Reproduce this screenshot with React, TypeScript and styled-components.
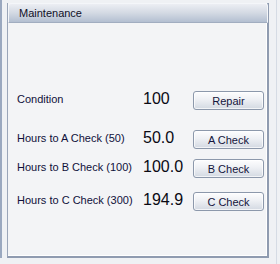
import React from 'react'
import styled, {createGlobalStyle} from 'styled-components'

const GlobalStyle = createGlobalStyle`
  html, body {
    margin: 0;
    padding: 0;
    background: #eff1f4;
  }
  body {
    font-family: "Liberation Sans", Tahoma, Arial, sans-serif;
    font-size: 11px;
  }
`

const Screen = styled.div`
  position: relative;
  width: 280px;
  height: 264px;
  overflow: hidden;
  display: flex;
  align-items: flex-start;
`

const LeftEdge = styled.div`
  width: 2px;
  height: 258px;
  background: #9aa8bf;
  flex-shrink: 0;
`

const RightEdge = styled.div`
  width: 1px;
  height: 264px;
  margin-left: 7px;
  background: #d5dbe4;
  flex-shrink: 0;
`

const Panel = styled.section`
  margin-left: 5px;
  margin-top: 3px;
  width: 262px;
  height: 255px;
  box-sizing: border-box;
  background: #f3f4f6;
  border-left: 1px solid #9aa5b8;
  border-right: 2px solid #8f9bb0;
  border-bottom: 2px solid #8f9bb0;
  box-shadow: inset -1px -1px 0 #ffffff;
  display: flex;
  flex-direction: column;
`

const Header = styled.header`
  height: 20px;
  box-sizing: border-box;
  margin-right: -1px;
  padding-left: 10px;
  display: flex;
  align-items: center;
  border: 1px solid #f4f6f9;
  border-radius: 3px 3px 0 0;
  background: linear-gradient(to bottom, #eceef3 0%, #d3d9e3 50%, #b3bfd1 100%);
  border-bottom: 1px solid #a1adc0;
  color: #101028;
  font-size: 11px;
`

const Body = styled.div`
  padding: 68px 0 0 9px;
  display: flex;
  flex-direction: column;
`

const Row = styled.div<{gap: number}>`
  display: grid;
  grid-template-columns: 126px 50px 71px;
  align-items: center;
  height: 19px;
  margin-top: ${(p) => p.gap}px;
`

const Label = styled.span`
  color: #10103a;
  font-size: 11px;
  margin-top: -3px;
  white-space: nowrap;
`

const Value = styled.span`
  color: #0a0a14;
  font-size: 16px;
  margin-top: -3px;
  white-space: nowrap;
`

const Button = styled.button`
  width: 71px;
  height: 19px;
  padding: 0;
  box-sizing: border-box;
  border: 1px solid #8c98ab;
  border-radius: 3px;
  background: linear-gradient(to bottom, #fdfdfe 0%, #eef0f4 45%, #d3d9e2 100%);
  box-shadow: inset 0 0 0 1px rgba(255, 255, 255, 0.7);
  color: #14143c;
  font-family: "Liberation Sans", Tahoma, Arial, sans-serif;
  font-size: 11px;
  cursor: pointer;
`

const rows = [
  {label: 'Condition', value: '100', action: 'Repair', gap: 0},
  {label: 'Hours to A Check (50)', value: '50.0', action: 'A Check', gap: 20},
  {label: 'Hours to B Check (100)', value: '100.0', action: 'B Check', gap: 10},
  {label: 'Hours to C Check (300)', value: '194.9', action: 'C Check', gap: 14},
]

export default function App() {
  return (
    <>
      <GlobalStyle />
      <Screen>
        <LeftEdge />
        <Panel>
          <Header>Maintenance</Header>
          <Body>
            {rows.map((r) => (
              <Row key={r.action} gap={r.gap}>
                <Label>{r.label}</Label>
                <Value>{r.value}</Value>
                <Button>{r.action}</Button>
              </Row>
            ))}
          </Body>
        </Panel>
        <RightEdge />
      </Screen>
    </>
  )
}
